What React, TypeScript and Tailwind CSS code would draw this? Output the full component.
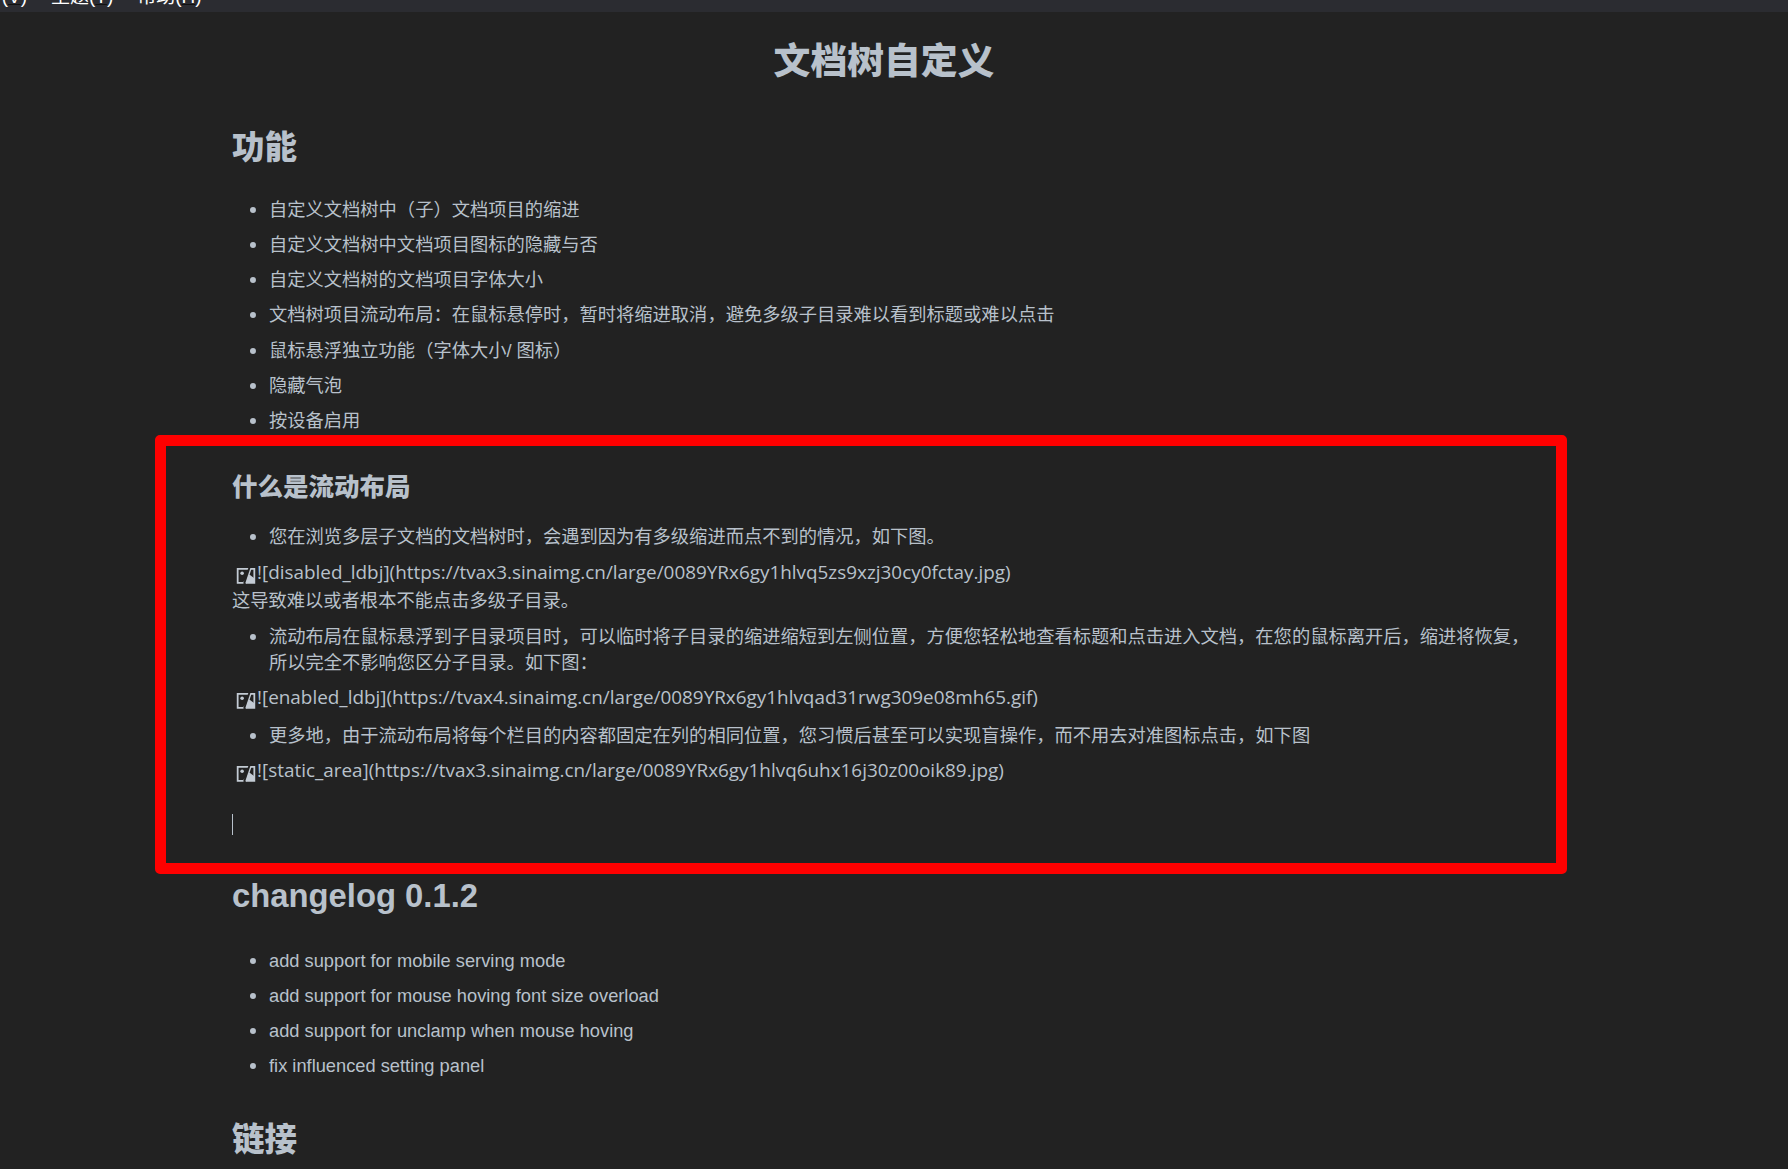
function Broken() {
  return (
    <svg width="20" height="20" viewBox="0 0 18 18" className="inline-block ml-[4px] mr-[1px] align-[-6px]">
      <path d="M1.5 3.5H16.5V16H1.5Z" fill="none" stroke="#c3cbd4" strokeWidth="1.6" />
      <circle cx="5.5" cy="7.5" r="1.6" fill="#c3cbd4" />
      <path d="M6 16L12 8.5L16.5 12V16Z" fill="#c3cbd4" />
      <path d="M7.5 17L12.5 2" stroke="#222222" strokeWidth="2.2" />
      <path d="M9 16.5L13.5 3" stroke="#c3cbd4" strokeWidth="1.2" />
    </svg>
  );
}

function Li({ children, h = "h-[35.3px]" }: { children: React.ReactNode; h?: string }) {
  return (
    <li className={`relative ${h} leading-[35px]`}>
      <span className="absolute left-[-19px] top-[15px] w-[6px] h-[6px] rounded-full bg-[#b8c1cb]" />
      {children}
    </li>
  );
}

function Img({ children }: { children: React.ReactNode }) {
  return (
    <div className="h-[28px] leading-[27px] text-[18.9px] font-['Open_Sans','Noto_Sans_CJK_SC',sans-serif] whitespace-nowrap">
      <Broken />
      {children}
    </div>
  );
}

export default function App() {
  return (
    <div className="relative w-[1788px] h-[1169px] overflow-hidden bg-[#222222] text-[#b8c1cb] text-[18.27px] font-['Liberation_Sans','Noto_Sans_CJK_SC',sans-serif]">
      <div className="h-[12px] bg-[#2b2c31] overflow-hidden relative">
        <div className="flex gap-[24px] text-white text-[19px] leading-[22px] mt-[-14px] ml-[-11px] whitespace-nowrap">
          <span>V(<span className="underline decoration-[#111111]">V</span>)</span>
          <span>主题(<span className="underline decoration-[#111111]">T</span>)</span>
          <span>帮助(<span className="underline decoration-[#111111]">H</span>)</span>
        </div>
      </div>

      <h1 className="h-[72px] mt-[14px] pr-[20px] leading-[72px] text-center text-[36.8px] font-black">文档树自定义</h1>

      <main className="w-[1311px] ml-[232px]">
        <h2 className="mt-[25.5px] h-[48px] leading-[48px] text-[32.5px] font-black">功能</h2>
        <ul className="mt-[20px] ml-[37px]">
          <Li>自定义文档树中（子）文档项目的缩进</Li>
          <Li>自定义文档树中文档项目图标的隐藏与否</Li>
          <Li>自定义文档树的文档项目字体大小</Li>
          <Li>文档树项目流动布局：在鼠标悬停时，暂时将缩进取消，避免多级子目录难以看到标题或难以点击</Li>
          <Li>鼠标悬浮独立功能（字体大小/ 图标）</Li>
          <Li>隐藏气泡</Li>
          <Li>按设备启用</Li>
        </ul>

        <h3 className="mt-[28px] h-[40px] leading-[40px] text-[25.5px] font-black">什么是流动布局</h3>
        <ul className="mt-[12.5px] ml-[37px]">
          <Li h="h-[36px]">您在浏览多层子文档的文档树时，会遇到因为有多级缩进而点不到的情况，如下图。</Li>
        </ul>
        <div className="mt-[4px]">
          <Img>![disabled_ldbj](https://tvax3.sinaimg.cn/large/0089YRx6gy1hlvq5zs9xzj30cy0fctay.jpg)</Img>
          <div className="h-[27px] leading-[27px]">这导致难以或者根本不能点击多级子目录。</div>
        </div>
        <ul className="mt-[9.5px] ml-[37px]">
          <li className="relative leading-[26px]">
            <span className="absolute left-[-19px] top-[10px] w-[6px] h-[6px] rounded-full bg-[#b8c1cb]" />
            流动布局在鼠标悬浮到子目录项目时，可以临时将子目录的缩进缩短到左侧位置，方便您轻松地查看标题和点击进入文档，在您的鼠标离开后，缩进将恢复，所以完全不影响您区分子目录。如下图：
          </li>
        </ul>
        <div className="mt-[8px]">
          <Img>![enabled_ldbj](https://tvax4.sinaimg.cn/large/0089YRx6gy1hlvqad31rwg309e08mh65.gif)</Img>
        </div>
        <ul className="mt-[10px] ml-[37px]">
          <li className="relative leading-[27px]">
            <span className="absolute left-[-19px] top-[11px] w-[6px] h-[6px] rounded-full bg-[#b8c1cb]" />
            更多地，由于流动布局将每个栏目的内容都固定在列的相同位置，您习惯后甚至可以实现盲操作，而不用去对准图标点击，如下图
          </li>
        </ul>
        <div className="mt-[8px]">
          <Img>![static_area](https://tvax3.sinaimg.cn/large/0089YRx6gy1hlvq6uhx16j30z00oik89.jpg)</Img>
        </div>
        <div className="mt-[29px] w-px h-[21px] bg-[#b8c1cb]" />

        <h2 className="mt-[37.5px] h-[48px] leading-[48px] text-[32.8px] font-bold">changelog 0.1.2</h2>
        <ul className="mt-[22.5px] ml-[37px]">
          <Li>add support for mobile serving mode</Li>
          <Li>add support for mouse hoving font size overload</Li>
          <Li>add support for unclamp when mouse hoving</Li>
          <Li>fix influenced setting panel</Li>
        </ul>
        <h2 className="mt-[32px] h-[48px] leading-[48px] text-[32.5px] font-black">链接</h2>
      </main>

      <div className="absolute left-[155px] top-[435px] w-[1412px] h-[439px] border-[11px] border-[#ff0000] rounded-[5px] pointer-events-none" />
    </div>
  );
}
